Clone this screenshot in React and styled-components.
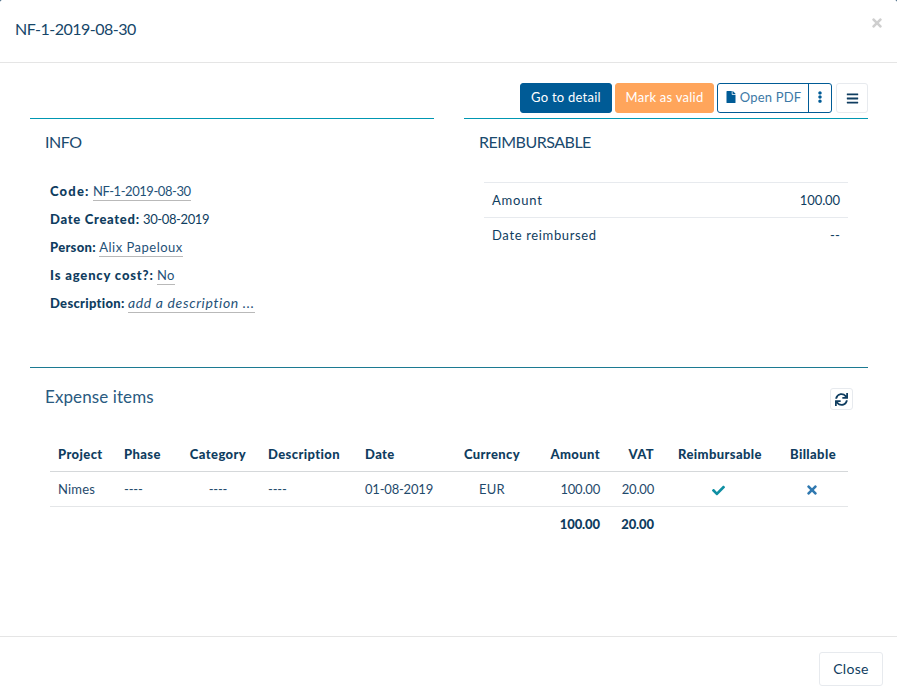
import React from "react";
import styled, { createGlobalStyle } from "styled-components";
import { FaFile, FaEllipsisV, FaBars, FaSync, FaCheck, FaTimes } from "react-icons/fa";

const GlobalStyle = createGlobalStyle`
  html, body {
    margin: 0;
    padding: 0;
    background: #0f3d60;
  }
  body {
    font-family: "Lato", "Open Sans", sans-serif;
    font-size: 13px;
    color: #0f3d60;
  }
`;

const Modal = styled.div`
  width: 897px;
  height: 700px;
  display: flex;
  flex-direction: column;
  background: #fff;
  overflow: hidden;
  border-radius: 2px 2px 0 0;
`;
const Header = styled.header`
  height: 56px;
  flex: none;
  display: flex;
  align-items: center;
  justify-content: space-between;
  padding: 0 13px 6px 15px;
  border-bottom: 1px solid #e5e5e5;
`;
const Title = styled.h4`
  margin: 0;
  font-size: 16px;
  font-weight: 400;
  letter-spacing: -0.5px;
  color: #164669;
`;
const CloseX = styled.span`
  display: flex;
  margin-top: -10px;
  font-size: 14px;
  color: #cfcfcf;
`;
const Body = styled.main`
  flex: 1;
  padding: 20px 29px 0 30px;
`;
const Toolbar = styled.div`
  display: flex;
  justify-content: flex-end;
  height: 30px;
  gap: 3px;
`;
const Button = styled.button`
  height: 30px;
  padding: 0 0 2px;
  width: ${(p) => p.$width}px;
  font: inherit;
  letter-spacing: 0.25px;
  border-radius: 3px;
  border: 1px solid ${(p) => p.$bg};
  background: ${(p) => p.$bg};
  color: #fff;
`;
const SplitGroup = styled.div`
  display: flex;
  border: 1px solid #005b96;
  border-radius: 3px;
  height: 30px;
  box-sizing: border-box;
  color: #3d79a6;
`;
const PdfButton = styled.div`
  box-sizing: border-box;
  width: 91px;
  padding-bottom: 2px;
  display: flex;
  align-items: center;
  justify-content: center;
  gap: 3px;
  letter-spacing: 0.2px;
  border-right: 1px solid #005b96;
  svg {
    color: #005b96;
    font-size: 12px;
  }
`;
const KebabButton = styled.div`
  width: 22px;
  padding-bottom: 2px;
  display: flex;
  align-items: center;
  justify-content: center;
  font-size: 12px;
  color: #005b96;
`;
const IconButton = styled.div`
  box-sizing: border-box;
  display: flex;
  align-items: center;
  justify-content: center;
  width: ${(p) => p.$width}px;
  height: ${(p) => p.$height}px;
  margin-left: 1px;
  border: 1px solid #e7eaee;
  border-radius: 3px;
  font-size: 13px;
  color: #0f3d60;
`;
const Columns = styled.div`
  display: grid;
  grid-template-columns: 404px 404px;
  justify-content: space-between;
  height: 249px;
  margin-top: 5px;
  border-bottom: 1px solid #1c7a92;
`;
const Panel = styled.section`
  border-top: 1px solid #0097b2;
  height: 100%;
`;
const PanelTitle = styled.h5`
  margin: 0;
  padding: 13px 0 0 15px;
  height: 48px;
  box-sizing: border-box;
  font-size: 16px;
  line-height: 20px;
  font-weight: 400;
  letter-spacing: -0.5px;
  color: #1a4a6e;
`;
const InfoList = styled.div`
  display: flex;
  flex-direction: column;
  padding: 10px 0 0 20px;
`;
const InfoRow = styled.div`
  height: 28px;
  line-height: 28px;
`;
const Label = styled.strong`
  font-weight: 900;
  letter-spacing: ${(p) => p.$track}px;
`;
const Value = styled.span`
  letter-spacing: ${(p) => p.$track}px;
`;
const Editable = styled.span`
  color: #1f5278;
  border-bottom: 1px solid #b9b9b9;
  padding-bottom: 1px;
  letter-spacing: ${(p) => p.$track}px;
  font-style: ${(p) => (p.$empty ? "italic" : "normal")};
  font-size: ${(p) => (p.$empty ? "14px" : "13px")};
`;
const SummaryTable = styled.table`
  width: 364px;
  margin: 15px 0 0 20px;
  border-collapse: collapse;
`;
const SummaryCell = styled.td`
  height: 34px;
  padding: 0 8px;
  border-top: 1px solid #e7eaee;
  text-align: ${(p) => p.$align || "left"};
  letter-spacing: ${(p) => p.$track}px;
`;
const ItemsHead = styled.div`
  display: flex;
  align-items: center;
  justify-content: space-between;
  height: 62px;
  padding: 0 15px;
`;
const ItemsTitle = styled.h5`
  margin: 0 0 6px;
  font-size: 17px;
  font-weight: 400;
  letter-spacing: 0.1px;
  color: #2a5a80;
`;
const ItemsTable = styled.table`
  width: 798px;
  margin: 7px 0 0 20px;
  table-layout: fixed;
  border-collapse: collapse;
  letter-spacing: 0.2px;
`;
const Th = styled.th`
  height: 34px;
  padding: 0 8px;
  box-sizing: border-box;
  font-weight: 900;
  letter-spacing: 0.4px;
  text-align: ${(p) => p.$align || "left"};
  border-bottom: 1px solid #d5d8da;
`;
const Td = styled.td`
  height: 35px;
  padding: 0 8px;
  box-sizing: border-box;
  text-align: ${(p) => p.$align || "left"};
  border-bottom: 1px solid #e4e6e8;
  color: ${(p) => p.$color || "#1f4a6c"};
  letter-spacing: ${(p) => (p.$numeric ? "-0.2px" : "0.2px")};
  svg {
    display: inline-block;
    vertical-align: middle;
    margin-right: 3px;
    font-size: ${(p) => p.$iconSize || 13}px;
  }
`;
const TotalTd = styled.td`
  height: 35px;
  padding: 0 8px;
  text-align: right;
  font-weight: 900;
  letter-spacing: -0.1px;
`;
const Footer = styled.footer`
  height: 63px;
  flex: none;
  display: flex;
  align-items: center;
  justify-content: flex-end;
  padding: 0 14px;
  border-top: 1px solid #e5e5e5;
`;
const CloseButton = styled.button`
  width: 64px;
  height: 34px;
  padding: 0;
  font: inherit;
  font-size: 14px;
  letter-spacing: 0.3px;
  color: #0f3d60;
  background: #fff;
  border: 1px solid #e7eaee;
  border-radius: 3px;
`;

const columns = [
  { name: "Project", width: 66 },
  { name: "Phase", width: 60 },
  { name: "Category", width: 84, align: "center" },
  { name: "Description", width: 97 },
  { name: "Date", width: 98 },
  { name: "Currency", width: 74, align: "center" },
  { name: "Amount", width: 79, align: "right" },
  { name: "VAT", width: 54, align: "right" },
  { name: "Reimbursable", width: 116, align: "center" },
  { name: "Billable", width: 70, align: "center" },
];

export default function App() {
  return (
    <Modal>
      <GlobalStyle />
      <Header>
        <Title>NF-1-2019-08-30</Title>
        <CloseX>
          <FaTimes />
        </CloseX>
      </Header>
      <Body>
        <Toolbar>
          <Button $bg="#005b96" $width={92}>Go to detail</Button>
          <Button $bg="#ffa55b" $width={99}>Mark as valid</Button>
          <SplitGroup>
            <PdfButton>
              <FaFile />
              Open PDF
            </PdfButton>
            <KebabButton>
              <FaEllipsisV />
            </KebabButton>
          </SplitGroup>
          <IconButton $width={32} $height={30}>
            <FaBars />
          </IconButton>
        </Toolbar>
        <Columns>
          <Panel>
            <PanelTitle>INFO</PanelTitle>
            <InfoList>
              <InfoRow>
                <Label $track={1.2}>Code:</Label> <Editable $track={-0.45}>NF-1-2019-08-30</Editable>
              </InfoRow>
              <InfoRow>
                <Label $track={0.7}>Date Created:</Label> <Value $track={-0.4}>30-08-2019</Value>
              </InfoRow>
              <InfoRow>
                <Label $track={0.3}>Person:</Label> <Editable $track={0.5}>Alix Papeloux</Editable>
              </InfoRow>
              <InfoRow>
                <Label $track={0.85}>Is agency cost?:</Label> <Editable $track={0.3}>No</Editable>
              </InfoRow>
              <InfoRow>
                <Label $track={0.3}>Description:</Label> <Editable $empty $track={0.65}>add a description ...</Editable>
              </InfoRow>
            </InfoList>
          </Panel>
          <Panel>
            <PanelTitle>REIMBURSABLE</PanelTitle>
            <SummaryTable>
              <tbody>
                <tr>
                  <SummaryCell $track={0.8}>Amount</SummaryCell>
                  <SummaryCell $align="right" $track={-0.1}>100.00</SummaryCell>
                </tr>
                <tr>
                  <SummaryCell $track={0.65}>Date reimbursed</SummaryCell>
                  <SummaryCell $align="right" $track={0.2}>--</SummaryCell>
                </tr>
              </tbody>
            </SummaryTable>
          </Panel>
        </Columns>
        <ItemsHead>
          <ItemsTitle>Expense items</ItemsTitle>
          <IconButton $width={23} $height={22}>
            <FaSync />
          </IconButton>
        </ItemsHead>
        <ItemsTable>
          <colgroup>
            {columns.map((c) => (
              <col key={c.name} width={c.width} />
            ))}
          </colgroup>
          <thead>
            <tr>
              {columns.map((c) => (
                <Th key={c.name} $align={c.align}>{c.name}</Th>
              ))}
            </tr>
          </thead>
          <tbody>
            <tr>
              <Td>Nimes</Td>
              <Td $numeric>----</Td>
              <Td $numeric $align="center">----</Td>
              <Td $numeric>----</Td>
              <Td $numeric>01-08-2019</Td>
              <Td $align="center">EUR</Td>
              <Td $numeric $align="right">100.00</Td>
              <Td $numeric $align="right">20.00</Td>
              <Td $align="center" $iconSize={13} $color="#0f8fa3"><FaCheck /></Td>
              <Td $align="center" $iconSize={14} $color="#2f78b0"><FaTimes /></Td>
            </tr>
            <tr>
              <TotalTd colSpan={7}>100.00</TotalTd>
              <TotalTd>20.00</TotalTd>
              <TotalTd colSpan={2} />
            </tr>
          </tbody>
        </ItemsTable>
      </Body>
      <Footer>
        <CloseButton>Close</CloseButton>
      </Footer>
    </Modal>
  );
}
